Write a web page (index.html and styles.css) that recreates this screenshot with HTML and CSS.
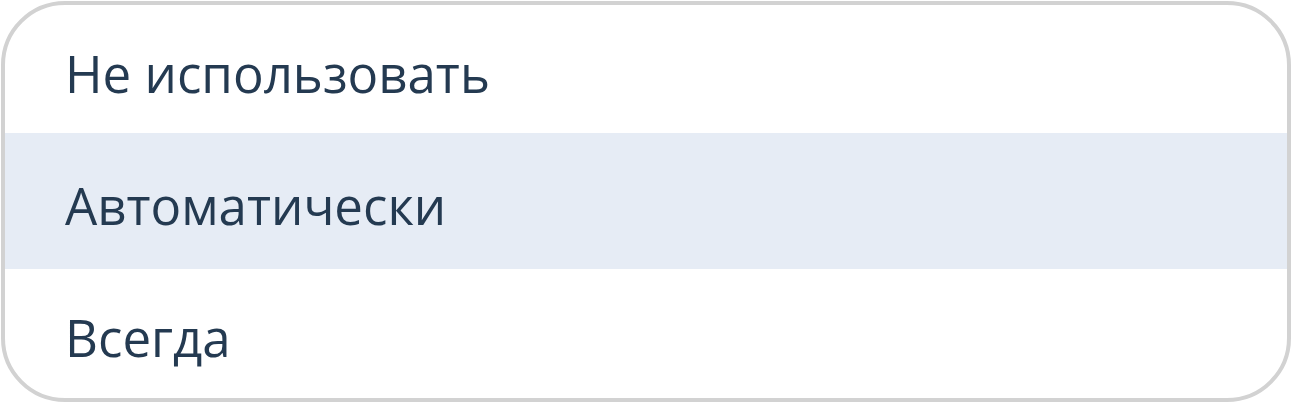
FILE: index.html
```html
<!DOCTYPE html>
<html lang="ru">
<head>
<meta charset="utf-8">
<link rel="stylesheet" href="styles.css">
</head>
<body>
<ul class="menu">
  <li class="item item-first">Не использовать</li>
  <li class="item item-active">Автоматически</li>
  <li class="item item-last">Всегда</li>
</ul>
</body>
</html>
```
FILE: styles.css
```css
html, body {
  margin: 0;
  padding: 0;
  background: #ffffff;
}
body {
  width: 1292px;
  height: 403px;
  padding: 1px;
  box-sizing: border-box;
}
.menu {
  list-style: none;
  margin: 0;
  padding: 0;
  width: 1290px;
  height: 401px;
  box-sizing: border-box;
  border: 4px solid #d2d2d2;
  border-radius: 64px;
  overflow: hidden;
  display: flex;
  flex-direction: column;
  font-family: "Open Sans", "Noto Sans", sans-serif;
  font-size: 51px;
  color: #243a51;
}
.item {
  display: flex;
  align-items: center;
  padding: 8px 0 0 60px;
  height: 136px;
  box-sizing: border-box;
  line-height: 1;
}
.item-first, .item-last {
  height: 128px;
}
.item-active {
  background: #e6ecf5;
}
```
